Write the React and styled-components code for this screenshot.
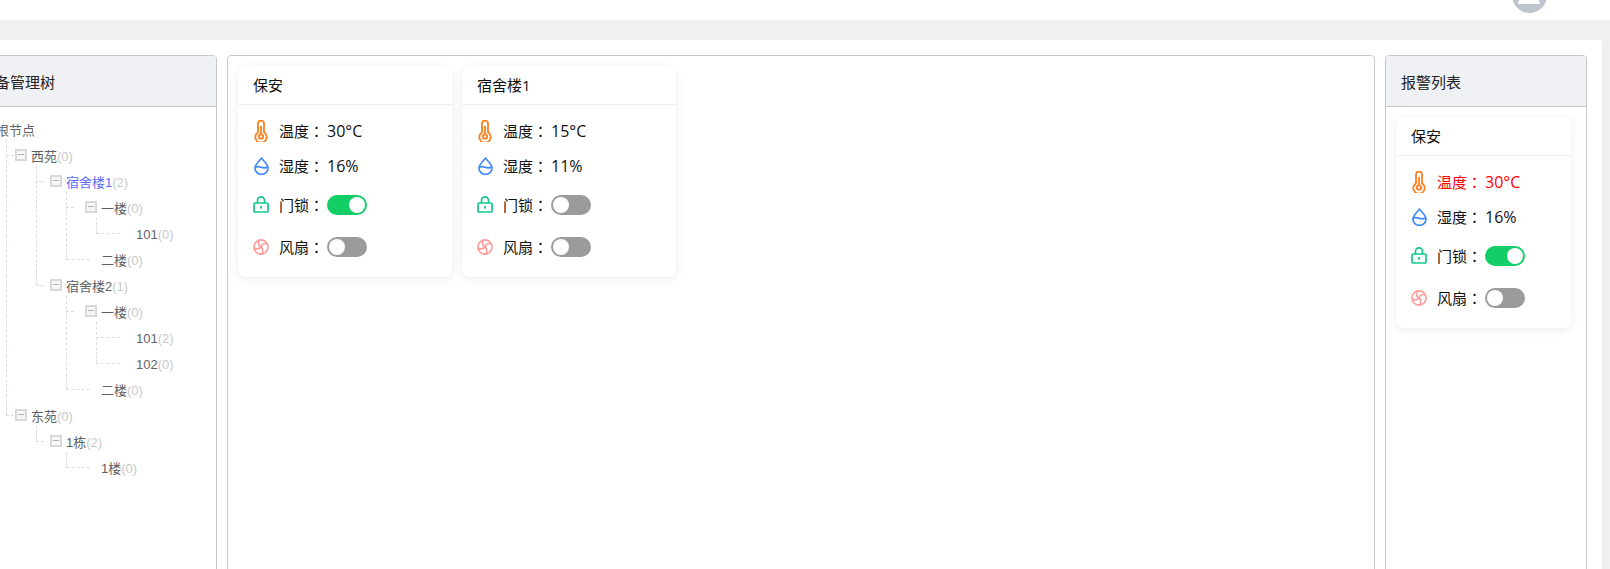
import React from 'react';
import styled, { createGlobalStyle } from 'styled-components';

const GlobalStyle = createGlobalStyle`
    html, body {
        margin: 0;
        padding: 0;
        height: 100%;
        overflow: hidden;
        background: #f0f0f1;
    }
    #root {
        height: 100%;
    }
`;

const FONT = `"Liberation Sans", "Noto Sans CJK SC", sans-serif`;
const CARD_FONT = `"Open Sans", "Noto Sans CJK SC", sans-serif`;

const Page = styled.div`
    width: 1610px;
    height: 569px;
    overflow: hidden;
    display: flex;
    flex-direction: column;
    font-family: ${FONT};
`;

const TopBar = styled.header`
    flex: 0 0 20px;
    height: 20px;
    background: #fff;
    display: flex;
    justify-content: flex-end;
    align-items: flex-end;
    padding: 0 63px 7px 0;
    box-sizing: border-box;
`;

const Avatar = styled.div`
    flex: 0 0 35px;
    width: 35px;
    height: 35px;
    border-radius: 50%;
    background: #c0c4cc;
    overflow: hidden;
    svg {
        display: block;
    }
`;

const Main = styled.main`
    flex: 1;
    margin: 20px 8px 0 -51px;
    padding: 15px 15px 0;
    background: #fff;
    border-radius: 0 3px 0 0;
    display: flex;
    gap: 10px;
    min-height: 600px;
`;

const Panel = styled.section`
    box-sizing: border-box;
    flex: ${(p) => (p.$width ? `0 0 ${p.$width}px` : '1')};
    height: 600px;
    border: 1px solid #c8c9cc;
    border-radius: 4px;
    background: #fff;
    overflow: hidden;
`;

const PanelHeader = styled.div`
    height: 51px;
    box-sizing: border-box;
    padding: 0 15px;
    background: #f0f1f5;
    border-bottom: 1px solid #c8c9cc;
    display: flex;
    align-items: center;
    font-size: 15px;
    color: #222;
    font-family: ${CARD_FONT};
`;

const TreeBody = styled.div`
    padding: 9px 0 0 15px;
`;

const TreeList = styled.ul`
    list-style: none;
    margin: 0;
    padding: 0;
`;

const TreeItem = styled.li`
    position: relative;

    &::before {
        content: ${(p) => (p.$level > 0 ? "''" : 'none')};
        position: absolute;
        left: ${(p) => 26 + 30 * (p.$level - 1)}px;
        top: -2px;
        bottom: ${(p) => (p.$last ? 'auto' : '0')};
        height: ${(p) => (p.$last ? '15px' : 'auto')};
        border-left: 1px dashed #dddce6;
    }

    &::after {
        content: ${(p) => (p.$level > 0 ? "''" : 'none')};
        position: absolute;
        left: ${(p) => 26 + 30 * (p.$level - 1)}px;
        top: 13px;
        width: ${(p) => (p.$leaf ? 24 : 8)}px;
        border-top: 1px dashed #dddce6;
    }
`;

const TreeRow = styled.div`
    height: 26px;
    display: flex;
    align-items: center;
    gap: 4px;
    padding-left: ${(p) => p.$level * 35}px;
    font-size: 13px;
    color: ${(p) => (p.$active ? '#5b6ef5' : '#606266')};
`;

const NodeText = styled.span`
    line-height: 26px;
    padding-top: 3px;
    white-space: nowrap;
`;

const ExpandBox = styled.span`
    flex: 0 0 12px;
    width: 12px;
    height: 12px;
    box-sizing: border-box;
    margin-top: -1px;
    border: 2px solid #d8d8d8;
    background: #f7f7f7;
    display: flex;
    align-items: center;
    justify-content: center;
    visibility: ${(p) => (p.$hidden ? 'hidden' : 'visible')};

    &::before {
        content: '';
        width: 6px;
        height: 1px;
        background: #b0b0b0;
    }
`;

const Count = styled.span`
    color: #c8c9cc;
`;

const CardGrid = styled.div`
    padding: 10px;
    display: flex;
    gap: 10px;
    align-items: flex-start;
`;

const CardColumn = styled.div`
    padding: 10px 15px 10px 10px;
`;

const Card = styled.div`
    flex: 0 0 ${(p) => (p.$wide ? '214px' : 'auto')};
    box-sizing: border-box;
    background: #fff;
    border-radius: 8px;
    box-shadow: 0 2px 10px rgba(0, 0, 0, 0.08);
    font-family: ${CARD_FONT};
    font-size: 15px;
    color: #111;
`;

const CardTitle = styled.div`
    height: 39px;
    box-sizing: border-box;
    padding: 0 15px 2px;
    display: flex;
    align-items: center;
    border-bottom: 1px solid #eeeff1;
`;

const CardBody = styled.div`
    padding: 9px 15px 9px;
`;

const Row = styled.div`
    height: ${(p) => (p.$tall ? 42 : 35)}px;
    display: flex;
    align-items: center;
    color: ${(p) => (p.$alert ? '#ff0000' : 'inherit')};
`;

const IconSlot = styled.span`
    flex: 0 0 16px;
    width: 16px;
    margin: -1px 10px 0 0;
    display: flex;
    justify-content: center;
    svg {
        display: block;
    }
`;

const Label = styled.span`
    flex: 0 0 45px;
    margin-top: -2px;
    white-space: nowrap;
`;

/* the reference's full-width colon sits centred in its cell, as in the TC face */
const Colon = styled.span`
    font-family: "Noto Sans CJK TC", sans-serif;
`;

const Value = styled.span`
    margin: -2px 0 0 3px;
    font-size: 16px;
`;

const Switch = styled.span`
    width: 40px;
    height: 20px;
    margin-left: 3px;
    box-sizing: border-box;
    padding: 2px;
    border-radius: 10px;
    background: ${(p) => (p.$on ? '#13ce66' : '#9b9b9b')};
    display: flex;
    justify-content: ${(p) => (p.$on ? 'flex-end' : 'flex-start')};

    &::before {
        content: '';
        width: 16px;
        height: 16px;
        border-radius: 50%;
        background: #fff;
    }
`;

const ThermoIcon = () => (
    <svg width="14" height="22" viewBox="0 0 14 22" fill="none" stroke="#ff7f1e" strokeWidth="1.8">
        <path d="M4 12.2V3.6a3 3 0 0 1 6 0v8.600a5.700 5.700 0 1 1-6 0z" />
        <circle cx="7" cy="16.500" r="2.200" />
        <path d="M7 6v8" />
    </svg>
);

const DropIcon = () => (
    <svg width="15" height="18" viewBox="0 0 15 18" fill="none" stroke="#3d8bff" strokeWidth="1.700">
        <path d="M7.500 1.200C5 4.200 1 7.400 1 11.200a6.500 6.200 0 0 0 13 0C14 7.400 10 4.200 7.500 1.200z" />
        <path d="M1.200 10.400c2.200-1.400 4.200-.6 6.300 0s4.200.6 6.300-.4" />
    </svg>
);

const LockIcon = () => (
    <svg width="16" height="17" viewBox="0 0 16 17" fill="none" stroke="#13c98a" strokeWidth="1.700">
        <path d="M4.500 7V4.400a3.500 3.500 0 0 1 7 0V7" />
        <rect x="1" y="7" width="14" height="9" rx="1" />
        <path d="M8 10v2.800" />
    </svg>
);

const FanIcon = () => (
    <svg width="16" height="16" viewBox="0 0 16 16" fill="none" stroke="#ff9a9a" strokeWidth="1.600">
        <circle cx="8" cy="8" r="7.100" />
        <path d="M8 8C5.500 7 4.300 3.800 6.500 1.200" />
        <path d="M8 8c.5-2.600 3.500-4.300 6.600-3" />
        <path d="M8 8c2.200 1.600 2.700 5 .3 7" />
        <path d="M8 8c-1.600 2.200-4.800 2.700-7 .6" />
    </svg>
);

const treeData = {
    name: '根节点',
    children: [
        {
            name: '西苑',
            count: 0,
            children: [
                {
                    name: '宿舍楼1',
                    count: 2,
                    active: true,
                    children: [
                        { name: '一楼', count: 0, children: [{ name: '101', count: 0 }] },
                        { name: '二楼', count: 0 },
                    ],
                },
                {
                    name: '宿舍楼2',
                    count: 1,
                    children: [
                        {
                            name: '一楼',
                            count: 0,
                            children: [
                                { name: '101', count: 2 },
                                { name: '102', count: 0 },
                            ],
                        },
                        { name: '二楼', count: 0 },
                    ],
                },
            ],
        },
        {
            name: '东苑',
            count: 0,
            children: [
                { name: '1栋', count: 2, children: [{ name: '1楼', count: 0 }] },
            ],
        },
    ],
};

const TreeNode = ({ node, level, last }) => {
    const leaf = !node.children;
    return (
        <TreeItem $level={level} $last={last} $leaf={leaf}>
            <TreeRow $level={level} $active={node.active}>
                <ExpandBox $hidden={leaf} />
                <NodeText>
                    {node.name}
                    {node.count !== undefined && <Count>({node.count})</Count>}
                </NodeText>
            </TreeRow>
            {!leaf && (
                <TreeList>
                    {node.children.map((child, index) => (
                        <TreeNode
                            key={index}
                            node={child}
                            level={level + 1}
                            last={index === node.children.length - 1}
                        />
                    ))}
                </TreeList>
            )}
        </TreeItem>
    );
};

const DeviceCard = ({ title, temp, humidity, lock, fan, alert, wide }) => (
    <Card $wide={wide}>
        <CardTitle>{title}</CardTitle>
        <CardBody>
            <Row $alert={alert}>
                <IconSlot><ThermoIcon /></IconSlot>
                <Label>温度<Colon>{'\uFF1A'}</Colon></Label>
                <Value>{temp}</Value>
            </Row>
            <Row>
                <IconSlot><DropIcon /></IconSlot>
                <Label>湿度<Colon>{'\uFF1A'}</Colon></Label>
                <Value>{humidity}</Value>
            </Row>
            <Row $tall>
                <IconSlot><LockIcon /></IconSlot>
                <Label>门锁<Colon>{'\uFF1A'}</Colon></Label>
                <Switch $on={lock} />
            </Row>
            <Row $tall>
                <IconSlot><FanIcon /></IconSlot>
                <Label>风扇<Colon>{'\uFF1A'}</Colon></Label>
                <Switch $on={fan} />
            </Row>
        </CardBody>
    </Card>
);

export default function App() {
    return (
        <Page>
            <GlobalStyle />
            <TopBar>
                <Avatar>
                    <svg width="35" height="35" viewBox="0 0 35 35" fill="#fff">
                        <circle cx="17" cy="12" r="6" />
                        <path d="M6 26c.5-3 2-6 5-7h12c3 1 4.500 4 5 7z" />
                    </svg>
                </Avatar>
            </TopBar>
            <Main>
                <Panel $width={253}>
                    <PanelHeader>设备管理树</PanelHeader>
                    <TreeBody>
                        <TreeList>
                            <TreeNode node={treeData} level={0} last />
                        </TreeList>
                    </TreeBody>
                </Panel>
                <Panel>
                    <CardGrid>
                        <DeviceCard wide title="保安" temp="30°C" humidity="16%" lock fan={false} />
                        <DeviceCard wide title="宿舍楼1" temp="15°C" humidity="11%" lock={false} fan={false} />
                    </CardGrid>
                </Panel>
                <Panel $width={202}>
                    <PanelHeader>报警列表</PanelHeader>
                    <CardColumn>
                        <DeviceCard alert title="保安" temp="30°C" humidity="16%" lock fan={false} />
                    </CardColumn>
                </Panel>
            </Main>
        </Page>
    );
}
